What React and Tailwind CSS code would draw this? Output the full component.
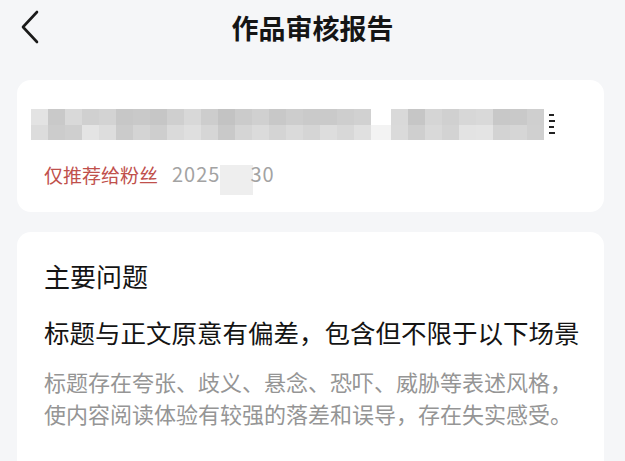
import React from "react";

const seg1Top = [
  "bg-[#e3e3e3]", "bg-[#c9c9c9]", "bg-[#d9d9d9]", "bg-[#d0d0d0]", "bg-[#d3d3d3]",
  "bg-[#c7c7c7]", "bg-[#c9c9c9]", "bg-[#c6c6c6]", "bg-[#cfcfcf]", "bg-[#d8d8d8]",
  "bg-[#cdcdcd]", "bg-[#c3c3c3]", "bg-[#cbcbcb]", "bg-[#d0d0d0]", "bg-[#c8c8c8]",
  "bg-[#cdcdcd]", "bg-[#cacaca]", "bg-[#cacaca]", "bg-[#cecece]", "bg-[#d1d1d1]",
];
const seg1Bottom = [
  "bg-[#dcdcdc]", "bg-[#cccccc]", "bg-[#cfcfcf]", "bg-[#e4e4e4]", "bg-[#dddddd]",
  "bg-[#cbcbcb]", "bg-[#d4d4d4]", "bg-[#cecece]", "bg-[#dadada]", "bg-[#dfdfdf]",
  "bg-[#d6d6d6]", "bg-[#c9c9c9]", "bg-[#d5d5d5]", "bg-[#dbdbdb]", "bg-[#d4d4d4]",
  "bg-[#dadada]", "bg-[#d5d5d5]", "bg-[#dddddd]", "bg-[#d8d8d8]", "bg-[#e0e0e0]",
];
const seg2Top = [
  "bg-[#d9d9d9]", "bg-[#c6c6c6]", "bg-[#d5d5d5]", "bg-[#d0d0d0]", "bg-[#d7d7d7]",
  "bg-[#d9d9d9]", "bg-[#c8c8c8]", "bg-[#c9c9c9]", "bg-[#cfcfcf]",
];
const seg2Bottom = [
  "bg-[#dadada]", "bg-[#cfcfcf]", "bg-[#d9d9d9]", "bg-[#d3d3d3]", "bg-[#e3e3e3]",
  "bg-[#e4e4e4]", "bg-[#d3d3d3]", "bg-[#d6d6d6]", "bg-[#d0d0d0]",
];

function Mosaic({ top, bottom }) {
  return (
    <div className="flex flex-col">
      <div className="flex">
        {top.map((c, i) => (
          <div key={i} className={`w-[17px] h-[16px] ${c}`} />
        ))}
      </div>
      <div className="flex">
        {bottom.map((c, i) => (
          <div key={i} className={`w-[17px] h-[15px] ${c}`} />
        ))}
      </div>
    </div>
  );
}

export default function App() {
  return (
    <div
      className="w-[625px] h-[461px] overflow-hidden bg-[#f5f6f8]"
      style={{ fontFamily: '"Noto Sans CJK SC", "Noto Sans", sans-serif' }}
    >
      {/* header */}
      <div className="grid grid-cols-[1fr_auto_1fr] items-center h-[54px]">
        <div className="pl-[20px]">
          <svg width="20" height="34" viewBox="0 0 20 34" fill="none">
            <path
              d="M17 2 L3 17 L17 32"
              stroke="#1a1a1a"
              strokeWidth="2.6"
              strokeLinecap="round"
              strokeLinejoin="round"
            />
          </svg>
        </div>
        <h1 className="text-[27px] font-bold text-[#151515] leading-none">作品审核报告</h1>
        <div />
      </div>

      {/* work card */}
      <div className="ml-[17px] w-[587px] mt-[26px] h-[132px] bg-white rounded-[14px] px-[14px] pt-[29px]">
        <div className="flex items-start">
          <Mosaic top={seg1Top} bottom={seg1Bottom} />
          <div className="flex flex-col w-[20px]">
            <div className="h-[16px] bg-white" />
            <div className="h-[15px] bg-[#f3f3f3]" />
          </div>
          <Mosaic top={seg2Top} bottom={seg2Bottom} />
          <div className="flex flex-col gap-[4px] pt-[5px] pl-[5px]">
            <div className="w-[5px] h-[2px] bg-[#222]" />
            <div className="w-[6px] h-[2px] bg-[#222]" />
            <div className="w-[5px] h-[2px] bg-[#222]" />
            <div className="w-[6px] h-[2px] bg-[#222]" />
          </div>
        </div>
        <div className="flex items-center mt-[19px] pl-[13px] h-[30px]">
          <span className="text-[19px] text-[#c0504c] leading-none">仅推荐给粉丝</span>
          <span className="ml-[14px] text-[20px] tracking-[1px] text-[#a3a3a3] leading-none">2025</span>
          <div className="w-[33px] h-[30px] mt-[12px] bg-[#eeeeee]" />
          <span className="text-[20px] tracking-[1px] text-[#a3a3a3] leading-none -ml-[3px]">30</span>
        </div>
      </div>

      {/* issue card */}
      <div className="ml-[17px] w-[587px] mt-[20px] h-[260px] bg-white rounded-[14px] pl-[27px] pt-[26px]">
        <h2 className="text-[26px] font-normal text-[#141414] leading-[36px]">主要问题</h2>
        <p className="mt-[20px] text-[25.5px] font-normal text-[#141414] leading-[36px] whitespace-nowrap">
          标题与正文原意有偏差，包含但不限于以下场景
        </p>
        <p className="mt-[15px] text-[22px] text-[#959595] leading-[32px]">
          标题存在夸张、歧义、悬念、恐吓、威胁等表述风格，
          <br />
          使内容阅读体验有较强的落差和误导，存在失实感受。
        </p>
      </div>
    </div>
  );
}
